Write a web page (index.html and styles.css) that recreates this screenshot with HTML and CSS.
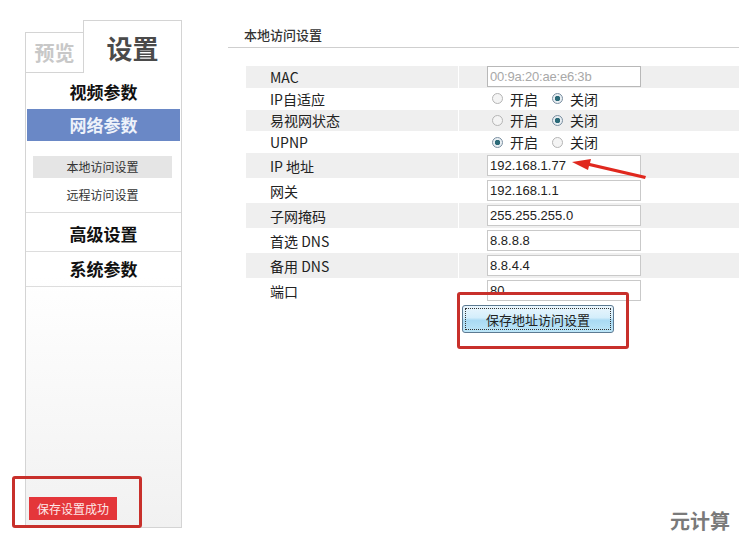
FILE: index.html
```html
<!DOCTYPE html>
<html lang="zh-CN">
<head>
  <meta charset="UTF-8">
  <meta name="viewport" content="width=device-width, initial-scale=1.0">
  <title>设置 - 本地访问设置</title>
  <link rel="stylesheet" href="styles.css">
</head>
<body>
  <div class="page">
    <aside class="sidebar">
      <div class="tabs">
        <div class="tab tab-off">预览</div>
        <div class="tab tab-on">设置</div>
      </div>
      <div class="panel">
        <div class="menu-item first">视频参数</div>
        <div class="menu-item active">网络参数</div>
        <div class="submenu">
          <div class="sub-item current">本地访问设置</div>
          <div class="sub-item">远程访问设置</div>
        </div>
        <div class="menu-item bordered tall">高级设置</div>
        <div class="menu-item bordered">系统参数</div>
        <div class="panel-fill"></div>
        <div class="status-row">
          <span class="status-btn">保存设置成功</span>
        </div>
      </div>
    </aside>

    <main class="content">
      <h2 class="section-title">本地访问设置</h2>

      <div class="form-table">
        <div class="row short stripe">
          <div class="label">MAC</div>
          <div class="value"><input class="field readonly" type="text" value="00:9a:20:ae:e6:3b" readonly></div>
        </div>
        <div class="row short">
          <div class="label">IP自适应</div>
          <div class="value">
            <label class="radio"><span class="dot"></span>开启</label>
            <label class="radio"><span class="dot on"></span>关闭</label>
          </div>
        </div>
        <div class="row short stripe">
          <div class="label">易视网状态</div>
          <div class="value">
            <label class="radio"><span class="dot"></span>开启</label>
            <label class="radio"><span class="dot on"></span>关闭</label>
          </div>
        </div>
        <div class="row short">
          <div class="label">UPNP</div>
          <div class="value">
            <label class="radio"><span class="dot on"></span>开启</label>
            <label class="radio"><span class="dot"></span>关闭</label>
          </div>
        </div>
        <div class="row stripe">
          <div class="label">IP 地址</div>
          <div class="value"><input class="field" type="text" value="192.168.1.77"></div>
        </div>
        <div class="row">
          <div class="label">网关</div>
          <div class="value"><input class="field" type="text" value="192.168.1.1"></div>
        </div>
        <div class="row stripe">
          <div class="label">子网掩码</div>
          <div class="value"><input class="field" type="text" value="255.255.255.0"></div>
        </div>
        <div class="row">
          <div class="label">首选 DNS</div>
          <div class="value"><input class="field" type="text" value="8.8.8.8"></div>
        </div>
        <div class="row stripe">
          <div class="label">备用 DNS</div>
          <div class="value"><input class="field" type="text" value="8.8.4.4"></div>
        </div>
        <div class="row">
          <div class="label">端口</div>
          <div class="value"><input class="field" type="text" value="80"></div>
        </div>
        <div class="actions">
          <button class="save-btn" type="button">保存地址访问设置</button>
        </div>
      </div>
    </main>
  </div>

  <!-- annotations drawn over the screenshot -->
  <div class="mark mark-status"></div>
  <div class="mark mark-save"></div>
  <svg class="arrow" width="80" height="24" viewBox="0 0 80 24">
    <path d="M78 20 L22 7 L23 3 L4 6 L20 14 L21 10 L77 23 Z" fill="#e0281e"/>
  </svg>

  <div class="watermark">元计算</div>
</body>
</html>
```

FILE: styles.css
```css
body {
  margin: 0;
  background-color: #FFFFFF;
  font-family: 'Noto Sans CJK SC', 'Liberation Sans', sans-serif;
  color: #222;
  overflow: hidden;
}

.page {
  display: flex;
  height: 538px;
  padding-left: 25px;
  box-sizing: border-box;
}

/* sidebar */

.sidebar {
  width: 157px;
  padding-top: 20px;
  display: flex;
  flex-direction: column;
}

.tabs {
  display: flex;
  align-items: flex-end;
}

.tab {
  box-sizing: border-box;
  font-weight: bold;
  text-align: center;
  border: 1px solid #D4D4D4;
  border-bottom: none;
}

.tab-off {
  width: 58px;
  height: 41px;
  line-height: 40px;
  font-size: 20px;
  color: #C8C8C8;
  border-right: none;
  border-bottom: 1px solid #D4D4D4;
}

.tab-on {
  width: 99px;
  height: 53px;
  line-height: 54px;
  font-size: 26px;
  color: #4A4A4A;
}

.panel {
  height: 455px;
  box-sizing: border-box;
  border: 1px solid #D4D4D4;
  border-top: none;
  background: linear-gradient(#FFFFFF 45%, #F1F1F1);
  display: flex;
  flex-direction: column;
}

.menu-item {
  height: 34px;
  line-height: 34px;
  text-align: center;
  font-size: 17px;
  font-weight: bold;
  color: #111;
}

.menu-item.first {
  height: 36px;
  line-height: 37px;
}

.menu-item.tall {
  height: 38px;
  line-height: 42px;
}

.menu-item.active {
  margin: 0 1px;
  height: 32px;
  line-height: 32px;
  background-color: #6A88C6;
  color: #EEF2FA;
}

.menu-item.bordered {
  border-bottom: 1px solid #DDDDDD;
}

.submenu {
  padding-top: 15px;
  border-bottom: 1px solid #DDDDDD;
}

.sub-item {
  margin: 0 9px 6px 7px;
  height: 22px;
  line-height: 22px;
  text-align: center;
  font-size: 12px;
  color: #333;
}

.sub-item.current {
  background-color: #E5E5E5;
}

.panel-fill {
  flex: 1;
}

.status-row {
  padding: 0 0 7px 3px;
}

.status-btn {
  display: inline-block;
  width: 88px;
  height: 23px;
  line-height: 23px;
  text-align: center;
  font-size: 12px;
  color: #FDE8E8;
  background-color: #E4363A;
}

/* main */

.content {
  flex: 1;
  margin-left: 46px;
  padding-top: 25px;
}

.section-title {
  margin: 0;
  padding-left: 16px;
  height: 22px;
  line-height: 20px;
  font-size: 13px;
  font-weight: 500;
  color: #333;
  border-bottom: 1px solid #CFCFCF;
}

.form-table {
  margin: 18px 0 0 18px;
}

.row {
  display: flex;
  height: 25px;
  align-items: center;
}

.row.short {
  height: 21.75px;
}

.row.stripe .label,
.row.stripe .value {
  background-color: #EFEFEF;
}

.label {
  width: 212px;
  height: 100%;
  padding-left: 24px;
  box-sizing: border-box;
  display: flex;
  align-items: center;
  font-size: 14px;
  color: #222;
  margin-right: 1px;
}

.value {
  flex: 1;
  height: 100%;
  padding-left: 28px;
  display: flex;
  align-items: center;
}

.field {
  width: 154px;
  height: 21px;
  box-sizing: border-box;
  border: 1px solid #C9C9C9;
  padding: 0 2px;
  font-family: 'Liberation Sans', sans-serif;
  font-size: 13px;
  color: #222;
  background-color: #FFFFFF;
}

.field.readonly {
  color: #A8A8A8;
  border-color: #B8B8B8;
  letter-spacing: -0.2px;
}

.radio {
  display: flex;
  align-items: center;
  font-size: 14px;
  color: #222;
  margin-right: 9px;
}

.dot {
  width: 11px;
  height: 11px;
  border-radius: 50%;
  border: 1px solid #B5B5B5;
  background-color: #F4F4F4;
  margin: 0 7px 0 5px;
  box-sizing: border-box;
}

.dot.on {
  border-color: #7A8EA0;
  background: radial-gradient(circle, #2B6A78 0 2.5px, #E8EEF2 3px);
}

.actions {
  padding: 2px 0 0 216px;
}

.save-btn {
  width: 152px;
  height: 28px;
  border: 1px solid #5C7A92;
  border-radius: 3px;
  outline: 1px dotted #333;
  outline-offset: -4px;
  background: linear-gradient(#EAF6FD 0%, #D4EEFB 45%, #A9DAF4 55%, #BDE6F8 100%);
  font-family: 'Noto Sans CJK SC', sans-serif;
  font-size: 13px;
  color: #222;
  cursor: pointer;
}

/* annotations */

.mark {
  position: absolute;
  border: 3px solid #C8302B;
  border-radius: 3px;
  box-sizing: border-box;
}

.mark-status {
  left: 12px;
  top: 476px;
  width: 130px;
  height: 52px;
}

.mark-save {
  left: 457px;
  top: 292px;
  width: 172px;
  height: 57px;
}

.arrow {
  position: absolute;
  left: 568px;
  top: 156px;
}

.watermark {
  position: absolute;
  left: 670px;
  top: 506px;
  font-size: 20px;
  font-weight: bold;
  color: #7A7A7A;
}
```
